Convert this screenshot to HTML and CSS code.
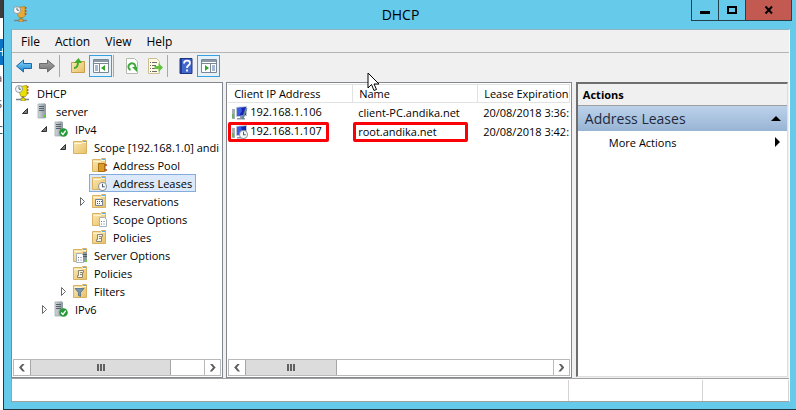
FILE: index.html
```html
<!DOCTYPE html>
<html lang="en">
<head>
    <meta charset="UTF-8">
    <meta name="viewport" content="width=device-width, initial-scale=1.0">
    <title>DHCP</title>
    <link rel="stylesheet" href="styles.css">
</head>
<body>
    <!-- shared icons -->
    <svg class="sprite" aria-hidden="true">
        <defs>
            <linearGradient id="gold" x1="0" y1="0" x2="1" y2="1">
                <stop offset="0" stop-color="#fbe9b4"/>
                <stop offset="1" stop-color="#e8c066"/>
            </linearGradient>
            <linearGradient id="metal" x1="0" y1="0" x2="1" y2="0">
                <stop offset="0" stop-color="#d3d9dd"/>
                <stop offset="1" stop-color="#87929a"/>
            </linearGradient>
            <linearGradient id="blue" x1="0" y1="0" x2="0" y2="1">
                <stop offset="0" stop-color="#8fdcfb"/>
                <stop offset="1" stop-color="#1583cf"/>
            </linearGradient>
            <linearGradient id="gray" x1="0" y1="0" x2="0" y2="1">
                <stop offset="0" stop-color="#a8a8a8"/>
                <stop offset="1" stop-color="#727272"/>
            </linearGradient>
        </defs>
        <symbol id="clock" viewBox="0 0 8 8">
            <circle cx="4" cy="4" r="3.5" fill="#f7f9fa" stroke="#8a949b" stroke-width=".9"/>
            <path d="M4 1.500V4.200H6" fill="none" stroke="#4f5a66" stroke-width=".9"/>
        </symbol>
        <symbol id="folder" viewBox="0 0 16 16">
            <path d="M1.500 2.500h8l1-1h4v13h-13z" fill="url(#gold)" stroke="#d9b160"/>
            <path d="M2.500 4.500h7l1-1h3.500" fill="none" stroke="#fff6d6"/>
            <path d="M11 2.500h3" stroke="#58aee8"/>
        </symbol>
        <symbol id="tower" viewBox="0 0 16 16">
            <path d="M4 1l7-.5 1 1v13.500H4z" fill="url(#metal)"/>
            <path d="M4 1h7v14H4z" fill="none" stroke="#9aa3a9" stroke-width=".7"/>
            <path d="M5 3.500h5M5 5.500h5M5 7.500h5" stroke="#56616a"/>
            <path d="M9 12h2v2H9z" fill="#62d53a"/>
        </symbol>
        <symbol id="ok" viewBox="0 0 8 8">
            <circle cx="4" cy="4" r="3.800" fill="#27993a"/>
            <path d="M2 4l1.500 1.700L6 2.300" fill="none" stroke="#fff" stroke-width="1.200"/>
        </symbol>
        <symbol id="page" viewBox="0 0 8 10">
            <path d="M.5.5h5l2 2v7h-7z" fill="#fff" stroke="#a9b2ba"/>
            <path d="M2 4.500h1M4.500 4.500h1M2 7h1M4.500 7h1" stroke="#5a6b93"/>
        </symbol>
        <symbol id="scroll" viewBox="0 0 16 16">
            <path d="M6.500 5.500h5v2h-1v5h-5v-2h1z" fill="#f6f3e8" stroke="#8b8672"/>
            <path d="M8 7.500h2M8 9.500h2" stroke="#8b8672"/>
        </symbol>
        <symbol id="pc" viewBox="0 0 16 16">
            <path d="M0 4h3v10H0z" fill="#a5aeb0"/>
            <path d="M0 9h2v4H0z" fill="#6fae68"/>
            <path d="M4 2l11-1v10l-11 1z" fill="#bcc5d6"/>
            <path d="M5 3l9-1v8l-9 1z" fill="#1426b4"/>
            <path d="M5 3l4-.5 1 3.500-3 4.800-2 .2z" fill="#3c5ce4"/>
            <path d="M8 11h3v2h2v1.500H5V13h3z" fill="#8d98a8"/>
        </symbol>
        <symbol id="dhcp" viewBox="0 0 16 16">
            <path d="M1 14.500h13" stroke="#7b858a" stroke-width="1.500"/>
            <path d="M8 11v3" stroke="#8b8d40" stroke-width="2"/>
            <path d="M6 13h4v3H6z" fill="currentColor" stroke="#7d7442" stroke-width=".6"/>
            <path d="M5 1.500l7-1v9l-1.500 2H6L4.500 8z" fill="currentColor" stroke="#9d8420" stroke-width=".7"/>
            <path d="M12 2h1.500M12 5h1.500M12 8h1.500" stroke="#c8351d" stroke-width="1.500"/>
            <use href="#clock" width="8" height="8"/>
        </symbol>
        <symbol id="shut" viewBox="0 0 16 16">
            <path d="M4.500 4.500v8l4-4z" fill="#fff" stroke="#6a6a6a"/>
        </symbol>
        <symbol id="open" viewBox="0 0 16 16">
            <path d="M8.500 5.500v5h-5z" fill="#7a7a7a" stroke="#333"/>
        </symbol>
    </svg>

    <div class="desktop">
        <div class="behind">
            <div class="behind-bar"></div>
            <div class="behind-tab">H</div>
            <div class="behind-row">a</div>
            <div class="behind-row">S</div>
            <div class="behind-row">C</div>
        </div>
        <div class="window">
            <header class="titlebar">
                <svg class="icon app"><use href="#dhcp"/></svg>
                <h1>DHCP</h1>
                <div class="controls">
                    <button class="min" aria-label="Minimize"><svg width="10" height="10"><path d="M0 6h10v3H0z"/></svg></button>
                    <button class="max" aria-label="Maximize"><svg width="10" height="10"><path d="M1 2h8v6H1z" fill="none" stroke="#000" stroke-width="2"/></svg></button>
                    <button class="close" aria-label="Close"><svg width="10" height="10"><path d="M1.500 1.500l6.500 7M8 1.500l-6.500 7" stroke="#000" stroke-width="2"/></svg></button>
                </div>
            </header>

            <div class="client">
                <nav class="menubar">
                    <button>File</button>
                    <button>Action</button>
                    <button>View</button>
                    <button>Help</button>
                </nav>

                <div class="toolbar">
                    <button aria-label="Back"><svg class="icon" viewBox="0 0 16 16"><path d="M.5 8l7-6v3.500h8v5h-8V14z" fill="url(#blue)" stroke="#1b68a8"/></svg></button>
                    <button aria-label="Forward"><svg class="icon" viewBox="0 0 16 16"><path d="M15.500 8l-7-6v3.500h-8v5h8V14z" fill="url(#gray)" stroke="#6b6b6b"/></svg></button>
                    <span class="sep"></span>
                    <button aria-label="Up one level"><svg class="icon" viewBox="0 0 16 16"><path d="M1.500 4.500h5l1-1h7v11h-13z" fill="url(#gold)" stroke="#c89f4b"/><path d="M4 10c3 0 4-2 4-6" fill="none" stroke="#42ad26" stroke-width="2"/><path d="M4 5L8.500 0l3.500 5z" fill="#42ad26"/></svg></button>
                    <button class="on" aria-label="Show console tree"><svg class="icon" viewBox="0 0 16 16"><path d="M.5 1.500h15v13H.5z" fill="#fff" stroke="#7d8794"/><path d="M1 3h14" stroke="#8c99aa" stroke-width="2"/><path d="M1 5.500h14M6.500 6v8" stroke="#7d8794"/><path d="M2 8h3M2 10h3M2 12h3" stroke="#5273a8"/><path d="M12 7v6l-4-3z" fill="#35a62c"/></svg></button>
                    <span class="sep"></span>
                    <button aria-label="Refresh"><svg class="icon" viewBox="0 0 16 16"><path d="M2.500.5h8l3 3v12h-11z" fill="#fff" stroke="#b9b9b0"/><path d="M6.500 12A3.500 3.500 0 1 1 11 10.500" fill="none" stroke="#3ba83a" stroke-width="2"/><path d="M8 9h5v5z" fill="#3ba83a"/></svg></button>
                    <button aria-label="Export list"><svg class="icon" viewBox="0 0 16 16"><path d="M1.500.5h8l3 3v12h-11z" fill="#fffbe5" stroke="#cdbf90"/><path d="M3 4.500h1M5 4.500h5M3 7.500h1M5 7.500h4M3 10.500h1M5 10.500h3M3 13.500h1M5 13.500h5" stroke="#6b6b6b"/><path d="M7.500 8h4V5l4.500 4.500-4.500 4.500v-3h-4z" fill="#63c340"/></svg></button>
                    <span class="sep"></span>
                    <button aria-label="Help"><svg class="icon" viewBox="0 0 16 16"><path d="M2 .5h12v15H2z" fill="#4166cc" stroke="#1f347d"/><path d="M3 1v14" stroke="#223c91" stroke-width="2"/><path d="M6 5.500c0-4 6-3.500 6-.5 0 2.500-3 2-3 5M9 11.500v2" fill="none" stroke="#fff" stroke-width="1.800"/></svg></button>
                    <button class="on" aria-label="Show action pane"><svg class="icon" viewBox="0 0 16 16"><path d="M.5 1.500h15v13H.5z" fill="#fff" stroke="#7d8794"/><path d="M1 3h14" stroke="#8c99aa" stroke-width="2"/><path d="M1 5.500h14M9.500 6v8" stroke="#7d8794"/><path d="M11 8h3M11 10h3M11 12h3" stroke="#5273a8"/><path d="M4 7v6l4-3z" fill="#35a62c"/></svg></button>
                </div>

                <main class="panes">
                    <section class="pane tree-pane">
                        <ul class="tree">
                            <li class="lv0"><div class="node"><svg class="icon yellow"><use href="#dhcp"/></svg><span>DHCP</span></div></li>
                            <li class="lv1"><svg class="icon"><use href="#open"/></svg><div class="node"><svg class="icon"><use href="#tower"/></svg><span>server</span></div></li>
                            <li class="lv2"><svg class="icon"><use href="#open"/></svg><div class="node"><svg class="icon"><use href="#tower" x="-2" width="16" height="16"/><use href="#ok" x="6" y="7" width="9" height="9"/></svg><span>IPv4</span></div></li>
                            <li class="lv3"><svg class="icon"><use href="#open"/></svg><div class="node"><svg class="icon"><use href="#folder"/></svg><span>Scope [192.168.1.0] andi</span></div></li>
                            <li class="lv4 leaf"><div class="node"><svg class="icon"><use href="#folder"/><path d="M7.500 6.500h6v8h-6z" fill="#dd9a28" stroke="#a96f14"/><path d="M15 7v2M15 12v2" stroke="#c8351d" stroke-width="1.500"/></svg><span>Address Pool</span></div></li>
                            <li class="lv4 leaf"><div class="node selected"><svg class="icon"><use href="#folder"/><use href="#clock" x="7" y="7" width="9" height="9"/></svg><span>Address Leases</span></div></li>
                            <li class="lv4"><svg class="icon"><use href="#shut"/></svg><div class="node"><svg class="icon"><use href="#folder"/><path d="M4.500 6.500h7v6h-7z" fill="#fff" stroke="#71859a"/><path d="M6 8.500h1M8 8.500h1M10 8.500h1M6 10.500h1M8 10.500h1" stroke="#27743d"/></svg><span>Reservations</span></div></li>
                            <li class="lv4 leaf"><div class="node"><svg class="icon"><use href="#folder"/><use href="#page" x="8" y="6" width="8" height="10"/></svg><span>Scope Options</span></div></li>
                            <li class="lv4 leaf"><div class="node"><svg class="icon"><use href="#folder"/><use href="#scroll"/></svg><span>Policies</span></div></li>
                            <li class="lv3 leaf"><div class="node"><svg class="icon"><use href="#folder"/><use href="#page" x="4" y="6" width="8" height="10"/><path d="M11 5h4v10h-4z" fill="#8e9aa1"/><path d="M11 7.500h4M11 9.500h4" stroke="#4f5b64"/><path d="M13 13h2v2h-2z" fill="#62d53a"/></svg><span>Server Options</span></div></li>
                            <li class="lv3 leaf"><div class="node"><svg class="icon"><use href="#folder"/><use href="#scroll"/></svg><span>Policies</span></div></li>
                            <li class="lv3"><svg class="icon"><use href="#shut"/></svg><div class="node"><svg class="icon"><use href="#folder"/><path d="M3 5.500h9L8.500 9.500v4l-2-1v-3z" fill="#6f96b8" stroke="#3f6484" stroke-width=".7"/></svg><span>Filters</span></div></li>
                            <li class="lv2"><svg class="icon"><use href="#shut"/></svg><div class="node"><svg class="icon"><use href="#tower" x="-2" width="16" height="16"/><use href="#ok" x="6" y="7" width="9" height="9"/></svg><span>IPv6</span></div></li>
                        </ul>
                        <div class="scrollbar">
                            <button class="left" aria-label="Scroll left"></button>
                            <div class="track"><div class="thumb"></div></div>
                            <button class="right" aria-label="Scroll right"></button>
                        </div>
                    </section>

                    <section class="pane list-pane">
                        <div class="list">
                            <table>
                                <thead>
                                    <tr><th class="ip">Client IP Address</th><th class="name">Name</th><th>Lease Expiration</th></tr>
                                </thead>
                                <tbody>
                                    <tr>
                                        <td><svg class="icon"><use href="#pc"/><path d="M14.500 3l-4 11" stroke="#668799" stroke-width="2"/></svg>192.168.1.106</td>
                                        <td>client-PC.andika.net</td>
                                        <td>20/08/2018 3:36:</td>
                                    </tr>
                                    <tr>
                                        <td class="marked"><svg class="icon"><use href="#pc"/><use href="#clock" x="7" y="6" width="9" height="9"/></svg>192.168.1.107</td>
                                        <td class="marked wide">root.andika.net</td>
                                        <td>20/08/2018 3:42:</td>
                                    </tr>
                                </tbody>
                            </table>
                        </div>
                        <div class="scrollbar">
                            <button class="left" aria-label="Scroll left"></button>
                            <div class="track"><div class="thumb"></div></div>
                            <button class="right" aria-label="Scroll right"></button>
                        </div>
                    </section>

                    <aside class="actions">
                        <h2>Actions</h2>
                        <button class="group">Address Leases <i class="up"></i></button>
                        <button class="more">More Actions <i class="next"></i></button>
                    </aside>
                </main>

                <footer class="statusbar">
                    <span class="msg"></span>
                    <span class="cell"></span>
                    <span class="cell last"></span>
                </footer>
            </div>
        </div>
        <svg class="cursor" viewBox="0 0 13 20"><path d="M1 1v15l3.500-3.500L7 18.500l2.500-1L7 12h5z" fill="#fff" stroke="#000"/></svg>
    </div>
</body>
</html>
```
FILE: styles.css
```css
*, *::before, *::after{
    box-sizing: border-box;
}
body{
    margin: 0;
    font-family: "Open Sans", "Noto Sans", sans-serif;
    font-size: 11px;
    color: #000;
}
button{
    font: inherit;
    color: inherit;
    border: none;
    background: none;
    padding: 0;
}
.sprite{
    position: absolute;
    width: 0;
    height: 0;
}
.icon{
    width: 16px;
    height: 16px;
    flex: none;
}
.desktop{
    display: flex;
    height: 100vh;
    background: #fff;
    overflow: hidden;
}

/* slice of the window behind */
.behind{
    width: 3px;
    flex: none;
    overflow: hidden;
    text-indent: -4px;
    line-height: 26px;
    color: #33475c;
}
.behind-bar{
    height: 18px;
    background: #3c3c3c;
}
.behind-tab{
    margin-top: 21px;
    height: 26px;
    color: #fff;
    background: #0a72c4;
}

.window{
    flex: 1;
    min-width: 0;
    display: flex;
    flex-direction: column;
    background: #66caea;
    border-left: 1px solid #1f3a47;
    border-bottom: 1px solid #1f3a47;
    padding: 0 6px 7px 7px;
}
.titlebar{
    display: grid;
    grid-template-columns: 1fr auto 1fr;
    height: 29px;
    flex: none;
}
.app{
    margin: 6px 0 0 2px;
    color: #e9a83a;
}
.yellow{
    color: #e9e100;
}
.titlebar h1{
    margin: 0;
    font-size: 14px;
    font-weight: normal;
    line-height: 29px;
}
.controls{
    display: flex;
    justify-self: end;
    height: 21px;
    margin-right: -2px;
    border: 1px solid #24414e;
    border-top: none;
}
.controls button{
    width: 27px;
    display: flex;
    align-items: center;
    justify-content: center;
    border-right: 1px solid #24414e;
}
.controls .close{
    width: 45px;
    background: #c25a52;
    border-right: none;
}

.client{
    flex: 1;
    min-height: 0;
    display: flex;
    flex-direction: column;
    background: #f0f0f0;
    border: 1px solid #a0a0a0;
    border-top-color: #8fb3c0;
    border-right-color: #fff;
}
.menubar{
    display: flex;
    gap: 15px;
    height: 23px;
    flex: none;
    padding-left: 9px;
    font-size: 12px;
    border-bottom: 1px solid #b4b4b4;
}
.toolbar{
    display: flex;
    align-items: center;
    height: 29px;
    flex: none;
    padding: 0 4px 3px 0;
}
.toolbar button{
    width: 23px;
    height: 22px;
    display: flex;
    align-items: center;
    justify-content: center;
}
.toolbar .on{
    background: #e6f2fa;
    border: 1px solid #36a0e0;
}
.sep{
    width: 1px;
    height: 22px;
    margin: 0 6px 0 1px;
    background: #a8a8a8;
}

.panes{
    flex: 1;
    min-height: 0;
    display: flex;
    gap: 3px;
}
.pane{
    display: flex;
    flex-direction: column;
    background: #fff;
    border: 1px solid #828790;
    padding: 1px;
    min-width: 0;
}
.tree-pane{
    flex: 212;
    margin-left: -1px;
}
.list-pane{
    flex: 348;
}
.tree{
    flex: 1;
    list-style: none;
    margin: 0;
    padding: 0;
    overflow: hidden;
}
.tree li{
    display: flex;
    align-items: center;
    height: 18px;
    white-space: nowrap;
}
.node{
    display: flex;
    align-items: center;
    height: 18px;
    padding: 0 2px 0 1px;
    border: 1px solid transparent;
    margin-left: -3px;
}
.node span{
    margin-left: 5px;
    padding: 0 1px;
}
.selected{
    background: #dbe9fa;
    border-color: #84acdd;
}
.tree .lv0{ padding-left: 3px; }
.tree .lv1{ padding-left: 6px; }
.tree .lv2{ padding-left: 25px; }
.tree .lv3{ padding-left: 44px; }
.tree .lv4{ padding-left: 63px; }
.leaf::before{
    content: "";
    width: 16px;
}

.scrollbar{
    display: flex;
    height: 17px;
    flex: none;
    border: 1px solid #b9b9b9;
}
.scrollbar button{
    width: 16px;
    display: flex;
    align-items: center;
    justify-content: center;
}
.scrollbar button::before{
    content: "";
    width: 6px;
    height: 8px;
    background: #606060;
    clip-path: polygon(60% 0, 100% 0, 45% 50%, 100% 100%, 60% 100%, 0 50%);
}
.scrollbar .right{
    border-left: 1px solid #b9b9b9;
}
.scrollbar .right::before{
    clip-path: polygon(0 0, 40% 0, 100% 50%, 40% 100%, 0 100%, 55% 50%);
}
.track{
    flex: 1;
}
.thumb{
    display: flex;
    align-items: center;
    justify-content: center;
    width: 81%;
    height: 100%;
    background: #dcdcdc;
    border: solid #a6a6a6;
    border-width: 0 1px;
}
.list-pane .thumb{
    width: 30%;
}
.thumb::before{
    content: "";
    width: 8px;
    height: 7px;
    background: repeating-linear-gradient(90deg, #606060 0 2px, transparent 2px 3px);
}

.list{
    flex: 1;
    overflow: hidden;
}
table{
    table-layout: fixed;
    width: 100%;
    border-spacing: 0;
}
th, td{
    height: 19px;
    padding: 0 0 0 5px;
    font-weight: normal;
    text-align: left;
    white-space: nowrap;
}
th{
    padding-left: 6px;
    border: 1px solid #e2e2e2;
    border-left: none;
}
.ip{
    width: 125px;
}
.name{
    width: 125px;
}
td .icon{
    vertical-align: middle;
    margin: 0 2px 0 -1px;
}

/* red frame over a cell */
.marked{
    position: relative;
}
.marked::after{
    content: "";
    position: absolute;
    left: 0;
    top: 0;
    width: 101px;
    height: 20px;
    border: 3px solid #fb0007;
    border-radius: 2px;
}
.wide::after{
    width: 115px;
}

.actions{
    flex: 213;
    display: flex;
    flex-direction: column;
    min-width: 0;
    margin: 0 1px 1px;
    background: #fff;
    border: 1px solid #dedede;
    border-top: 2px solid #6e6e6e;
    border-left: 2px solid #6e6e6e;
}
.actions h2{
    margin: 0;
    padding-left: 5px;
    font-size: 11px;
    line-height: 21px;
    background: #f0f0f0;
    border-bottom: 1px solid #a0a0a0;
}
.actions button{
    display: flex;
    align-items: center;
    justify-content: space-between;
    text-align: left;
}
.actions .group{
    height: 25px;
    padding: 0 6px 0 7px;
    font-size: 14px;
    color: #1e2a3c;
    background: linear-gradient(#bcd2ea, #98b4d4);
}
.actions .more{
    height: 22px;
    padding: 0 7px 0 31px;
}
.up{
    border: 5px solid transparent;
    border-top: none;
    border-bottom: 5px solid #000;
}
.next{
    border: 5px solid transparent;
    border-right: none;
    border-left: 5px solid #000;
}

.statusbar{
    display: flex;
    height: 23px;
    flex: none;
    background: #fff;
    border-top: 1px solid #a0a0a0;
    padding-top: 1px;
}
.msg{
    flex: 557;
    border-right: 1px solid #d4d4d4;
}
.cell{
    flex: 133;
    border-right: 1px solid #d4d4d4;
}
.last{
    flex: 85;
}
.cursor{
    position: absolute;
    left: 367px;
    top: 72px;
    width: 13px;
    height: 20px;
}
```
